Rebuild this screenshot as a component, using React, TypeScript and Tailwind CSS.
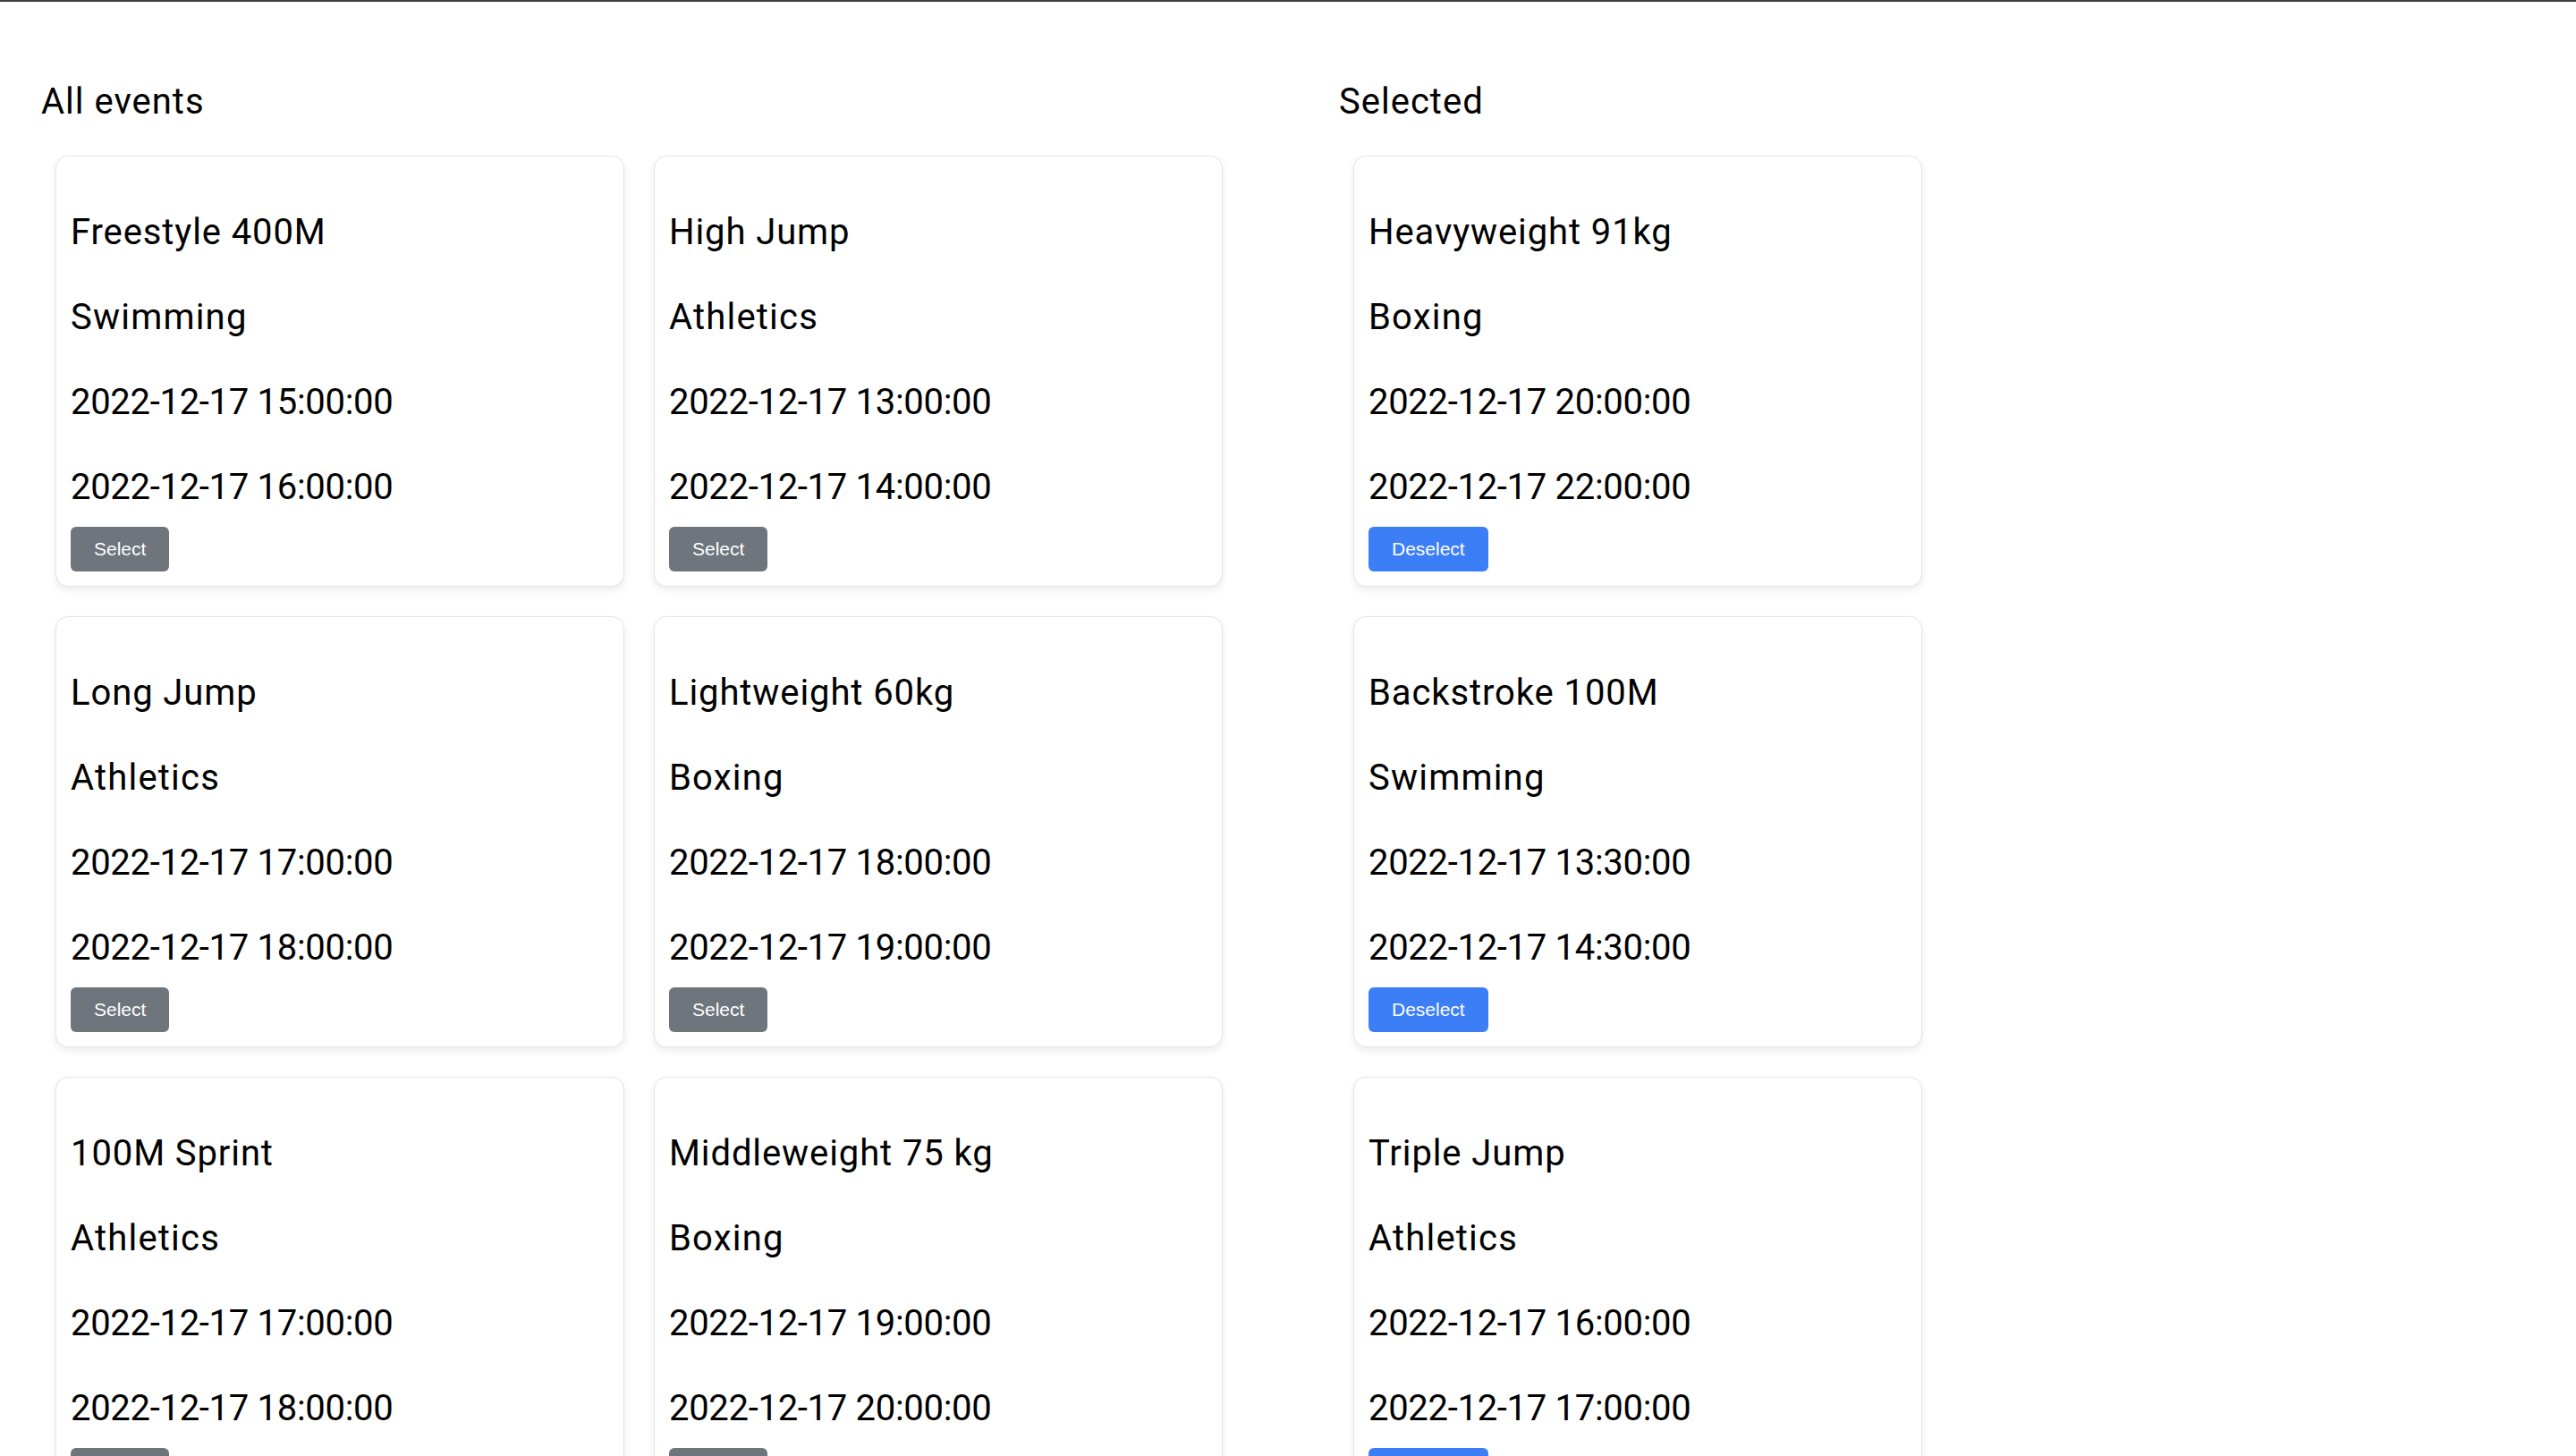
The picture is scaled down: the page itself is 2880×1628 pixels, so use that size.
import React from "react";

type Ev = { name: string; sport: string; start: string; end: string };

const allEvents: Ev[] = [
  { name: "Freestyle 400M", sport: "Swimming", start: "2022-12-17 15:00:00", end: "2022-12-17 16:00:00" },
  { name: "High Jump", sport: "Athletics", start: "2022-12-17 13:00:00", end: "2022-12-17 14:00:00" },
  { name: "Long Jump", sport: "Athletics", start: "2022-12-17 17:00:00", end: "2022-12-17 18:00:00" },
  { name: "Lightweight 60kg", sport: "Boxing", start: "2022-12-17 18:00:00", end: "2022-12-17 19:00:00" },
  { name: "100M Sprint", sport: "Athletics", start: "2022-12-17 17:00:00", end: "2022-12-17 18:00:00" },
  { name: "Middleweight 75 kg", sport: "Boxing", start: "2022-12-17 19:00:00", end: "2022-12-17 20:00:00" },
];

const selected: Ev[] = [
  { name: "Heavyweight 91kg", sport: "Boxing", start: "2022-12-17 20:00:00", end: "2022-12-17 22:00:00" },
  { name: "Backstroke 100M", sport: "Swimming", start: "2022-12-17 13:30:00", end: "2022-12-17 14:30:00" },
  { name: "Triple Jump", sport: "Athletics", start: "2022-12-17 16:00:00", end: "2022-12-17 17:00:00" },
];

function Card({ ev, sel }: { ev: Ev; sel: boolean }) {
  return (
    <div className="w-[636px] bg-white border border-[#e4e4e4] rounded-[14px] shadow-[0_4px_8px_rgba(0,0,0,0.08)] px-[16px] pt-[57px] pb-[16px] flex flex-col">
      <div className="flex flex-col gap-[39px]">
        <p className="h-[56px] leading-[56px] text-[40px] tracking-[0.9px]">{ev.name}</p>
        <p className="h-[56px] leading-[56px] text-[40px] tracking-[1.2px]">{ev.sport}</p>
        <p className="h-[56px] leading-[56px] text-[40px] tracking-[-0.3px]">{ev.start}</p>
        <p className="h-[56px] leading-[56px] text-[40px] tracking-[-0.3px]">{ev.end}</p>
      </div>
      <div className="mt-[16px]">
        <button
          className={
            "h-[50px] px-[26px] rounded-[6px] text-white text-[21px] font-['Liberation_Sans',Arial,sans-serif] " +
            (sel ? "bg-[#3b7ef6]" : "bg-[#6e757d]")
          }
        >
          {sel ? "Deselect" : "Select"}
        </button>
      </div>
    </div>
  );
}

export default function App() {
  return (
    <div className="min-h-screen bg-white text-black font-['Roboto','Liberation_Sans',sans-serif]">
      <div className="h-[2px] bg-[#3f3f3f]" />
      <div className="flex pl-[46px] pt-[82px]">
        <section className="w-[1451px] shrink-0">
          <h2 className="text-[40px] leading-[60px] font-normal tracking-[1px]">All events</h2>
          <div className="mt-[30px] ml-[16px] grid grid-cols-[636px_636px] gap-x-[33px] gap-y-[33px]">
            {allEvents.map((e) => (
              <Card key={e.name} ev={e} sel={false} />
            ))}
          </div>
        </section>
        <section>
          <h2 className="text-[40px] leading-[60px] font-normal tracking-[1px]">Selected</h2>
          <div className="mt-[30px] ml-[16px] grid grid-cols-[636px] gap-y-[33px]">
            {selected.map((e) => (
              <Card key={e.name} ev={e} sel={true} />
            ))}
          </div>
        </section>
      </div>
    </div>
  );
}
